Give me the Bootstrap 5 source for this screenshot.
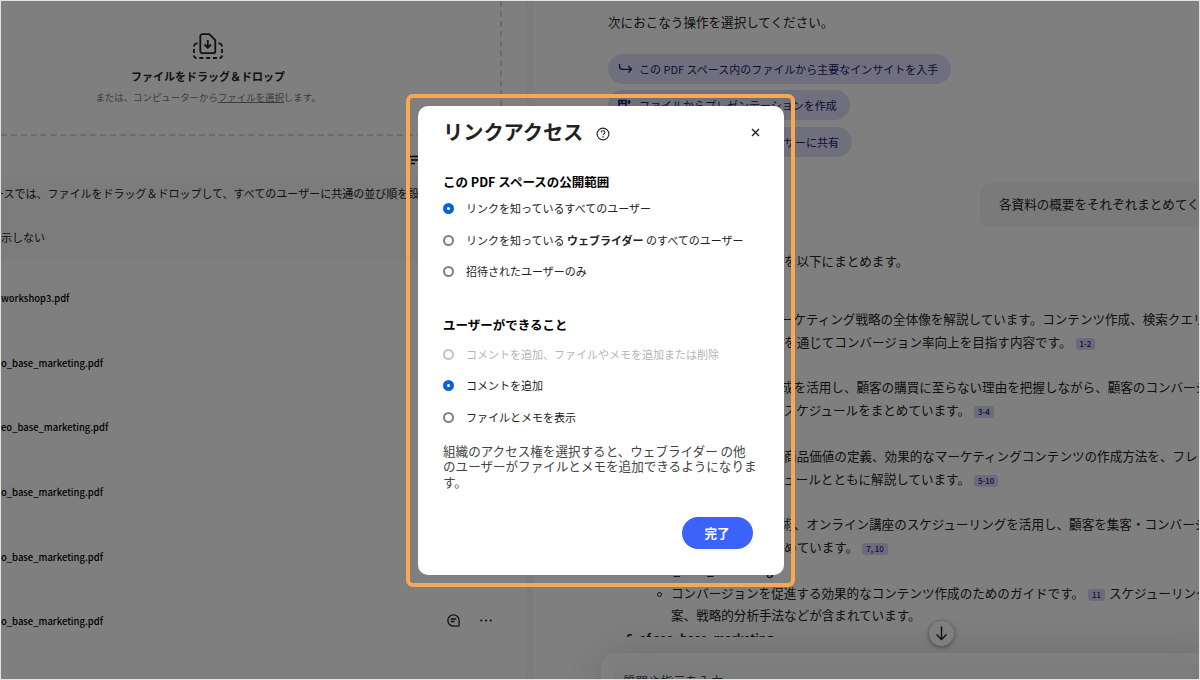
<!DOCTYPE html>
<html lang="ja">
<head>
<meta charset="utf-8">
<meta name="viewport" content="width=device-width, initial-scale=1">
<title>リンクアクセス</title>
<link href="https://cdn.jsdelivr.net/npm/bootstrap@5.3.0/dist/css/bootstrap.min.css" rel="stylesheet">
<style>
  body { font-family: "Noto Sans CJK JP", sans-serif; font-size: 12.57px; color: #222; background: #fff; }
  .app { width: 1200px; height: 680px; border: 1px solid #dfe3e3; }
  .files { width: 525px; flex: none; font-size: 11px; }
  .gutter { width: 7px; flex: none; background: #f7f7f7; }
  .dropzone { width: 501px; height: 135px; border: 2px dashed #d8d8d8; border-width: 0 2px 2px 0; padding: 32px 0 0; }
  .dropzone .inner { width: 414px; }
  .dropzone h2 { font-size: 11px; line-height: 16px; font-weight: 700; margin: 8px 0 0; }
  .dropzone p { font-size: 9.43px; line-height: 14px; color: #777; margin: 6px 0 0; }
  .toolbar { height: 41px; padding: 19px 0 0 408px; color: #000; }
  .notice { height: 82px; background: #f8f8f8; line-height: 16px; padding-top: 8px; white-space: nowrap; }
  .notice p { margin: 0 0 28px; }
  .notice p:first-child { margin-left: -8px; }
  .file-list { padding-top: 7px; }
  .file-row { height: 64.6px; font-size: 9.45px; font-weight: 500; color: #000; }
  .file-actions { margin: 0 34px 2px auto; gap: 20px; color: #222; }
  .chat { padding-left: 75px; line-height: 22.8px; white-space: nowrap; min-width: 0; overflow: hidden; }
  .intro { margin: 9.5px 0 0; }
  .chips { margin-top: 20.5px; gap: 6.6px; }
  .chip { height: 30px; border-radius: 15px; background: #dfdffd; color: #1c1866; font-size: 11px; line-height: 30px; padding: 0 13px 0 10px; gap: 6px; }
  .bubble { align-self: flex-end; width: 219px; height: 44px; line-height: 42px; border-radius: 10px 0 0 10px; background: #f5f5f5; padding-left: 19px; margin-top: 26px; }
  .lead-in { margin: 23px 0 12.5px; }
  .cite { display: inline-block; background: #d6d6fb; color: #1c1866; font-size: 7.8px; font-weight: 500; line-height: 11px; height: 12px; padding: 0 4px; border-radius: 3px; margin: 0 4px 0 4px; vertical-align: 0; }
  .answers h3 { font-size: 12.57px; font-weight: 700; line-height: 22.8px; margin: 0; padding-left: 18px; }
  .answers h3.tight { font-size: 11.7px; }
  .answers .detail { padding-left: 63px; position: relative; }
  .answers .pull { text-indent: -3px; }
  .answers .ring::before { content: ""; position: absolute; left: 48.5px; top: 10px; width: 5.5px; height: 5.5px; border: 1.2px solid #222; border-radius: 50%; }
  .fadeout { height: 9.5px; overflow: hidden; }
  .composer { left: 600px; top: 652px; width: 620px; height: 60px; border-radius: 14px 0 0 0; background: #fff; box-shadow: 0 0 44px rgba(0,0,0,.15); padding: 11px 0 0 13px; }
  .composer div { background: #f9f9f9; border-radius: 8px 0 0 0; line-height: 34px; color: #444; padding-left: 9px; }
  .jump { left: 928px; top: 620px; width: 25px; height: 25px; background: #fff; box-shadow: 0 1px 5px rgba(0,0,0,.45); }
  .scrim { inset: 1px; background: rgba(0,0,0,.5); }
  .focus-frame { left: 406px; top: 94px; width: 389px; height: 493px; border: 4px solid #f9a751; border-radius: 7px; padding: 8px; }
  .dialog { width: 365.5px; height: 468.5px; background: #fff; border-radius: 10px; padding: 12px 25px 25px; }
  .dialog h1 { font-size: 20.2px; line-height: 28px; font-weight: 700; margin: 0 13px 0 0; }
  .dialog h2 { font-size: 12.5px; line-height: 18px; font-weight: 700; color: #000; margin: 27px 0 8.5px; }
  .dialog h2.second { margin: 35px 0 11.5px; }
  .opt { height: 18px; margin-bottom: 13.5px; font-size: 11px; gap: 12px; white-space: nowrap; }
  .opt .form-check-input { width: 11px; height: 11px; margin: 0; border: 2px solid #808080; background: #fff; opacity: 1; flex: none; }
  .opt .form-check-input:checked { border: 4px solid #0562dc; }
  .opt .form-check-input:disabled { border-color: #c4c4c4; }
  .off { color: #b5b5b5; }
  .hint { line-height: 15.9px; margin: 16.5px 0 27px; color: #444; white-space: nowrap; }
  .btn-done, .btn-done:hover { background: #3b63fb; color: #fff; width: 71px; height: 32px; border-radius: 16px; padding: 0; font-size: 12.57px; font-weight: 700; line-height: 30px; border: 0; margin-right: 6px; }
  svg { display: block; fill: none; stroke: currentColor; flex: none; }
  .dots { fill: currentColor; stroke: none; }
  .help { margin-top: 4px; }
  .close-x { margin: 0 -1px 0 auto; }
</style>
</head>
<body class="overflow-hidden">
<div class="app d-flex overflow-hidden position-relative">
  <section class="files d-flex flex-column">
    <div class="dropzone"><div class="inner d-flex flex-column align-items-center">
      <svg width="30" height="27" viewBox="0 0 30 27" stroke-width="1.8"><path d="M9.300 1.200h7l6 6v11a2 2 0 0 1-2 2h-11a2 2 0 0 1-2-2V3.200a2 2 0 0 1 2-2z"/><path d="M14.800 7v7.500m-3.300-3 3.300 3.300 3.300-3.300"/><path d="M4.500 10.500A3 3 0 0 0 1 13.500m0 2.500v4m0 2.500A2.500 2.500 0 0 0 3.500 25m2.800 0h4m2.800 0h4m2.800 0h4m2.600 0a2.500 2.500 0 0 0 2.500-2.500m0-2.500v-4m0-2.500a3 3 0 0 0-3.500-3"/></svg>
      <h2>ファイルをドラッグ＆ドロップ</h2>
      <p>または、コンピューターから<u>ファイルを選択</u>します。</p>
    </div></div>
    <div class="toolbar"><svg width="12" height="10" stroke-width="1.7"><path d="M0 1.500h12M2 5h8M2 8.500h4"/></svg></div>
    <div class="notice"><p>ースでは、ファイルをドラッグ＆ドロップして、すべてのユーザーに共通の並び順を設定</p><p>示しない</p></div>
    <div class="file-list">
      <div class="file-row d-flex align-items-center">workshop3.pdf</div>
      <div class="file-row d-flex align-items-center">o_base_marketing.pdf</div>
      <div class="file-row d-flex align-items-center">eo_base_marketing.pdf</div>
      <div class="file-row d-flex align-items-center">o_base_marketing.pdf</div>
      <div class="file-row d-flex align-items-center">o_base_marketing.pdf</div>
      <div class="file-row d-flex align-items-center">o_base_marketing.pdf
        <div class="file-actions d-flex align-items-center">
          <svg width="13" height="13" stroke-width="1.300"><path d="M6.500.8a5.600 5.600 0 1 0 0 11.300h4.800a.8.8 0 0 0 .8-.8V6.500A5.600 5.600 0 0 0 6.500.8zM3.800 5h5.400M3.800 7.500h3.600"/></svg>
          <svg class="dots" width="12" height="3"><circle cx="1.300" cy="1.500" r="1.100"/><circle cx="6" cy="1.500" r="1.100"/><circle cx="10.700" cy="1.500" r="1.100"/></svg>
        </div>
      </div>
    </div>
  </section>
  <div class="gutter"></div>
  <main class="chat flex-grow-1 d-flex flex-column align-items-start">
    <p class="intro">次におこなう操作を選択してください。</p>
    <div class="chips d-flex flex-column align-items-start">
      <div class="chip d-flex align-items-center"><svg width="15" height="12" stroke-width="1.300"><path d="M1.500 1v1.500c0 3 1 3.800 3.500 3.800h8.500M10.300 3l3.300 3.300-3.300 3.300"/></svg>この PDF スペース内のファイルから主要なインサイトを入手</div>
      <div class="chip d-flex align-items-center"><svg width="15" height="12" stroke-width="1.600"><path d="M1 1.500h7v9H1zM1 4.500h7M4 1.500v3M11 1v4M9.500 3h3"/></svg>ファイルからプレゼンテーションを作成</div>
      <div class="chip d-flex align-items-center"><svg width="15" height="12" stroke-width="1.300"><circle cx="6" cy="4" r="2.500"/><path d="M1 11c0-5 10-5 10 0"/></svg>この PDF スペースを他のユーザーに共有</div>
    </div>
    <div class="bubble">各資料の概要をそれぞれまとめてください</div>
    <p class="lead-in">アップロードされた資料の概要を以下にまとめます。</p>
    <div class="answers">
      <h3>1. workshop3</h3>
      <div class="detail pull">こちらの資料ではマーケティング戦略の全体像を解説しています。コンテンツ作成、検索クエリ</div>
      <div class="detail">の改善や分析の実施を通じてコンバージョン率向上を目指す内容です。<span class="cite">1-2</span></div>
      <h3>2. seo_base_marketing</h3>
      <div class="detail pull">コンテンツの企画作成を活用し、顧客の購買に至らない理由を把握しながら、顧客のコンバージ</div>
      <div class="detail">具体的な運用とそのスケジュールをまとめています。<span class="cite">3-4</span></div>
      <h3>3. seo_base_marketing</h3>
      <div class="detail">顧客に提供するべき商品価値の定義、効果的なマーケティングコンテンツの作成方法を、フレー</div>
      <div class="detail">具体的な公開スケジュールとともに解説しています。<span class="cite">5-10</span></div>
      <h3>4. seo_base_marketing</h3>
      <div class="detail pull">集客を伸ばす基本技術、オンライン講座のスケジューリングを活用し、顧客を集客・コンバージ</div>
      <div class="detail">る方法を詳しくまとめています。<span class="cite">7, 10</span></div>
      <h3 class="tight">5. of seo_base_marketing</h3>
      <div class="detail ring">コンバージョンを促進する効果的なコンテンツ作成のためのガイドです。<span class="cite">11</span>スケジューリング</div>
      <div class="detail">案、戦略的分析手法などが含まれています。</div>
      <h3 class="tight fadeout">6. of seo_base_marketing</h3>
    </div>
  </main>
  <div class="composer position-absolute"><div>質問や指示を入力</div></div>
  <div class="jump position-absolute rounded-circle d-flex align-items-center justify-content-center"><svg width="13" height="15" stroke-width="1.500"><path d="M6.500.5v13M1.500 8.500l5 5 5-5"/></svg></div>
</div>
<div class="scrim position-fixed"></div>
<div class="focus-frame position-fixed">
  <div class="dialog" role="dialog">
    <div class="d-flex align-items-center">
      <h1>リンクアクセス</h1>
      <svg class="help" width="14" height="14" viewBox="0 0 14 14" stroke-width="1.100"><circle cx="7" cy="7" r="5.900"/><path d="M5.200 5.500c0-2.300 3.700-2.300 3.700 0 0 1.400-1.800 1.300-1.800 2.800"/><path d="M7.100 9.300v1.300" stroke-width="1.300"/></svg>
      <svg class="close-x" width="9" height="9" stroke-width="1.400"><path d="M1 1l7 7M8 1l-7 7"/></svg>
    </div>
    <h2>この PDF スペースの公開範囲</h2>
    <label class="opt d-flex align-items-center"><input class="form-check-input" type="radio" name="scope" checked><span>リンクを知っているすべてのユーザー</span></label>
    <label class="opt d-flex align-items-center"><input class="form-check-input" type="radio" name="scope"><span>リンクを知っている <b>ウェブライダー</b> のすべてのユーザー</span></label>
    <label class="opt d-flex align-items-center"><input class="form-check-input" type="radio" name="scope"><span>招待されたユーザーのみ</span></label>
    <h2 class="second">ユーザーができること</h2>
    <label class="opt d-flex align-items-center"><input class="form-check-input" type="radio" name="role" disabled><span class="off">コメントを追加、ファイルやメモを追加または削除</span></label>
    <label class="opt d-flex align-items-center"><input class="form-check-input" type="radio" name="role" checked><span>コメントを追加</span></label>
    <label class="opt d-flex align-items-center"><input class="form-check-input" type="radio" name="role"><span>ファイルとメモを表示</span></label>
    <p class="hint">組織のアクセス権を選択すると、ウェブライダー の他<br>のユーザーがファイルとメモを追加できるようになりま<br>す。</p>
    <div class="d-flex justify-content-end"><button class="btn btn-done">完了</button></div>
  </div>
</div>
</body>
</html>
